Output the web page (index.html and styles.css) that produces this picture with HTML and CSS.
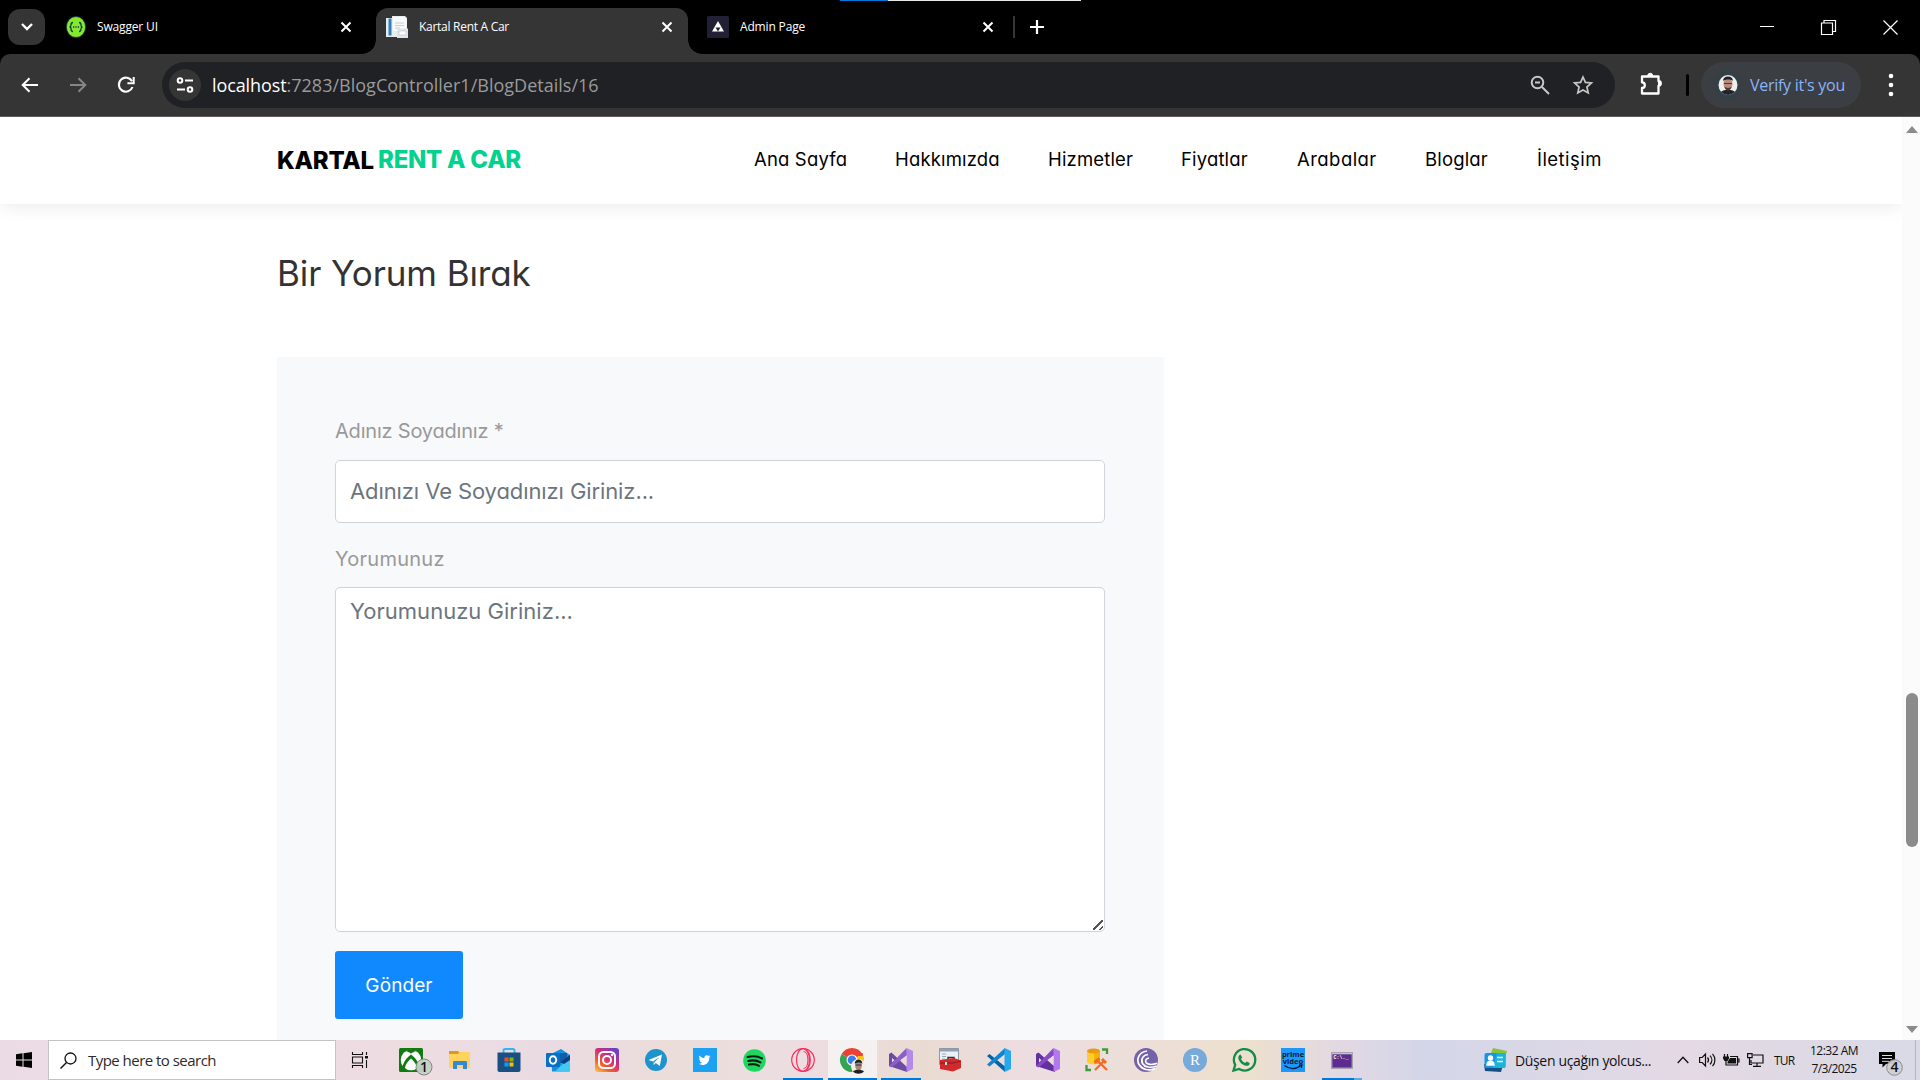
FILE: index.html
```html
<!DOCTYPE html>
<html lang="tr">
<head>
<meta charset="utf-8">
<title>Kartal Rent A Car</title>
<link rel="stylesheet" href="styles.css">
</head>
<body>
<div class="screen">
  <div class="loader"><span class="loader-fill"></span></div>

  <div class="tabstrip">
    <div class="tab-search"><svg width="14" height="10" viewBox="0 0 14 10"><path d="M2 2l5 5 5-5" class="ln w" stroke-width="2.4"/></svg></div>
    <div class="tab tab-first">
      <svg width="20" height="22" viewBox="0 0 20 22"><ellipse cx="10" cy="11" rx="9.6" ry="10.5" fill="#85ea2d" stroke="#173647" stroke-width=".8"/><path d="M7 6.5c-2 0-2 .8-2 2.500s-.3 2-1.500 2c1.200 0 1.500.5 1.500 2s0 2.500 2 2.500M13 6.500c2 0 2 .8 2 2.500s.3 2 1.500 2c-1.200 0-1.500.5-1.500 2s0 2.500-2 2.500" fill="none" stroke="#173647" stroke-width="1.300"/><path d="M7 11h1.300M9.400 11h1.300M11.800 11h1.300" stroke="#173647" stroke-width="1.500"/></svg>
      <span class="tab-title">Swagger UI</span>
      <svg class="tab-close" width="12" height="12" viewBox="0 0 12 12"><path d="M1.500 1.500l9 9M10.500 1.500l-9 9" class="ln w" stroke-width="2"/></svg>
    </div>
    <div class="tab tab-active">
      <svg width="22" height="22" viewBox="0 0 22 22"><path d="M0 2h6V0h13l2 2v19H0z" fill="#e9edf0"/><path d="M2.500 2.500h3v17h-3z" fill="#2f80bd"/><path d="M7 1h11.500l2 2v12H7z" fill="#f7f9fa"/><path d="M9 7h9M9 9.500h9M9 12h5" stroke="#c8ced3"/><path d="M11 12.500h11V22H11z" fill="#dfe5e9"/><path d="M13 15h7v4h-7z" fill="#fafbfc" stroke="#bfc8ce" stroke-width=".6"/></svg>
      <span class="tab-title t-kartal">Kartal Rent A Car</span>
      <svg class="tab-close" width="12" height="12" viewBox="0 0 12 12"><path d="M1.500 1.500l9 9M10.500 1.500l-9 9" class="ln w" stroke-width="2"/></svg>
    </div>
    <div class="tab tab-last">
      <svg width="22" height="22" viewBox="0 0 22 22"><rect width="22" height="22" rx="1.500" fill="#212035"/><path d="M11 5l6 10.500H5z" fill="#fff"/><path d="M8.500 11.500h5L11 15.500z" fill="#212035"/></svg>
      <span class="tab-title">Admin Page</span>
      <svg class="tab-close" width="12" height="12" viewBox="0 0 12 12"><path d="M1.500 1.500l9 9M10.500 1.500l-9 9" class="ln w" stroke-width="2"/></svg>
    </div>
    <span class="tab-sep"></span>
    <svg class="tab-new" width="16" height="16" viewBox="0 0 16 16"><path d="M8 1v14M1 8h14" class="ln w" stroke-width="2.200"/></svg>
    <div class="window-controls">
      <svg width="14" height="14" viewBox="0 0 14 14"><path d="M0 6.500h14" class="ln w"/></svg>
      <svg width="15" height="15" viewBox="0 0 15 15"><path d="M.5 3h11v11.500H.5zM3 3V.5h11.500v11H12" class="ln w" stroke-width="1.200"/></svg>
      <svg width="15" height="15" viewBox="0 0 15 15"><path d="M.5.5l14 14M14.500.5l-14 14" class="ln w" stroke-width="1.200"/></svg>
    </div>
  </div>

  <div class="toolbar-back">
  <div class="toolbar">
    <svg class="nav-back" width="18" height="16" viewBox="0 0 18 16"><path d="M17 8H2M8.500 1.200L1.700 8l6.800 6.800" class="ln w" stroke-width="2"/></svg>
    <svg class="nav-forward" width="18" height="16" viewBox="0 0 18 16"><path d="M1 8h15M9.500 1.200L16.300 8l-6.800 6.800" class="ln" stroke="#868686" stroke-width="2"/></svg>
    <svg class="nav-reload" width="18" height="18" viewBox="0 0 18 18"><path d="M15.500 11A7 7 0 1 1 15 5.200" class="ln w" stroke-width="2.100"/><path d="M16.700 1v6.300h-6.300" class="ln w" stroke-width="2"/></svg>
    <div class="omnibox">
      <span class="site-info"><svg width="18" height="16" viewBox="0 0 18 16"><g class="ln w" stroke-width="2"><circle cx="4" cy="3.500" r="2.300"/><path d="M9 3.500h8M1 12.500h8"/><circle cx="14" cy="12.500" r="2.300"/></g></svg></span>
      <span class="url"><b class="host">localhost</b>:7283/BlogController1/BlogDetails/16</span>
      <svg class="ob-zoom" width="20" height="20" viewBox="0 0 20 20"><g class="ln" stroke="#c7c7c7" stroke-width="2"><circle cx="7.500" cy="7.500" r="5.800"/><path d="M12 12l7 7M5 7.500h5"/></g></svg>
      <svg class="ob-star" width="20" height="20" viewBox="0 0 20 20"><path d="M10 2l2.400 5.400 6 .6-4.500 4 1.300 5.900L10 14.900l-5.200 3 1.300-5.900L1.600 8l6-.6z" class="ln" stroke="#c7c7c7" stroke-width="1.700"/></svg>
    </div>
    <svg class="ext" width="24" height="24" viewBox="0 0 24 24"><path d="M3 3.500h16.500v4.700a2.300 2.300 0 0 1 0 4.600v7.700H3V15a2.800 2.800 0 0 0 0-5.600z" class="ln w" stroke-width="2.300" stroke-linejoin="round"/><path d="M8.700 3a2.500 2.800 0 0 1 5 0zM19.500 8a2.500 2.700 0 0 1 0 5z" fill="#fff" stroke="#fff"/></svg>
    <span class="tool-sep"></span>
    <div class="profile">
      <svg width="26" height="28" viewBox="0 0 26 28"><ellipse cx="13" cy="14" rx="12" ry="13" fill="none" stroke="#24464e" stroke-width="1.800" stroke-dasharray="10 3"/><clipPath id="face"><ellipse cx="13" cy="14" rx="9.500" ry="10"/></clipPath><g clip-path="url(#face)"><path d="M0 0h26v28H0z" fill="#f1eeee"/><ellipse cx="13" cy="13" rx="4.500" ry="6" fill="#b98b7c"/><path d="M8.200 10c-.6-6 10.200-6 9.600 0-1-2-8-2-9.600 0zM4 26c1-7 5-7 9-7s8 0 9 7z" fill="#20242a"/><path d="M9 12.500h8" stroke="#4a3a38"/><path d="M9.500 16c1 4.500 6 4.500 7 0l-3.500 1z" fill="#4b3a38"/></g></svg>
      <span>Verify it's you</span>
    </div>
    <svg class="menu" width="6" height="24" viewBox="0 0 6 24"><g fill="#fff"><circle cx="3" cy="3" r="2.300"/><circle cx="3" cy="12" r="2.300"/><circle cx="3" cy="21" r="2.300"/></g></svg>
  </div>
  </div>

  <div class="viewport">
    <div class="page">
      <header class="site-nav">
        <div class="logo"><span class="logo-dark">KARTAL</span><span class="logo-green">RENT A CAR</span></div>
        <nav class="links"><a>Ana Sayfa</a><a>Hakkımızda</a><a>Hizmetler</a><a>Fiyatlar</a><a class="wide">Arabalar</a><a>Bloglar</a><a class="wide">İletişim</a></nav>
      </header>
      <main class="content">
        <h3 class="heading">Bir Yorum Bırak</h3>
        <form class="comment-form">
          <label class="label">Adınız Soyadınız *</label>
          <input class="field" type="text" placeholder="Adınızı Ve Soyadınızı Giriniz...">
          <label class="label label-second">Yorumunuz</label>
          <textarea class="field area" placeholder="Yorumunuzu Giriniz..."></textarea>
          <button class="send" type="button">Gönder</button>
        </form>
      </main>
    </div>
    <div class="scrollbar">
      <svg width="12" height="7" viewBox="0 0 12 7"><path d="M6 0l6 7H0z" fill="#8b8b8b"/></svg>
      <span class="thumb"></span>
      <svg width="12" height="7" viewBox="0 0 12 7"><path d="M6 7l6-7H0z" fill="#8b8b8b"/></svg>
    </div>
  </div>

  <div class="taskbar">
    <div class="start"><svg width="16" height="16" viewBox="0 0 16 16"><path d="M0 2.300L6.500 1.300v6.200H0zM7.500 1.200L16 0v7.500H7.500zM0 8.500h6.500v6.200L0 13.700zM7.500 8.500H16V16l-8.500-1.200z"/></svg></div>
    <div class="search"><svg width="17" height="17" viewBox="0 0 17 17"><circle cx="10.500" cy="6.500" r="5.500" class="ln" stroke="#111" stroke-width="1.300"/><path d="M6.500 10.500l-6 6" stroke="#111" stroke-width="1.400"/></svg><span>Type here to search</span></div>
    <div class="taskview"><svg width="16" height="16" viewBox="0 0 16 16"><path d="M.5 0v2.500h10V0M.5 16v-2.500h10V16M.5 5h10v6H.5zM14.500 0v3M14.500 8v8" class="ln" stroke="#111" stroke-width="1.100"/><path d="M13 4h3v2.500h-3z" fill="#111"/></svg></div>
    <div class="apps">
      <div class="app"><svg width="32" height="28" viewBox="0 0 32 28"><rect x="0" y="0" width="24" height="24" rx="1.500" fill="#107c10"/><circle cx="12" cy="12" r="10.300" fill="#fff"/><path d="M6 3.300c3 0 6 2.300 6 2.300s3-2.300 6-2.300C14 .8 10 .8 6 3.300z" fill="#107c10"/><path d="M3 21C4 14 8 9.500 12 6.500c4 3 8 7.500 9 14.500l-2.500 1C18 17 15 13 12 10.500 9 13 6 17 5.500 22z" fill="#107c10"/></svg><svg class="count" width="18" height="18" viewBox="0 0 18 18"><circle cx="9" cy="9" r="8" fill="#c4d0c5" fill-opacity=".95" stroke="#858585"/><text x="9" y="13.500" class="badge-text">1</text></svg></div>
      <div class="app"><svg width="22" height="18" viewBox="0 0 22 18"><path d="M0 0h9l2 2v3H0z" fill="#d99c16"/><path d="M0 3h9l2-2h10v16H0z" fill="#ffd35c"/><path d="M4 18v-6.500c0-1 .5-1.500 1.500-1.500h11c1 0 1.500.5 1.500 1.500V18h-4v-4H8v4z" fill="#3488d8"/></svg></div>
      <div class="app"><svg width="24" height="24" viewBox="0 0 24 24"><path d="M6.500 6V2.500c0-1 .5-1.500 1.500-1.500h8c1 0 1.500.5 1.500 1.500V6" fill="none" stroke="#30b7f2" stroke-width="2"/><path d="M.5 4.500h23V22c0 1.200-.8 2-2 2h-19c-1.200 0-2-.8-2-2z" fill="#194f83"/><path d="M7.500 9.500h4v4h-4z" fill="#f25022"/><path d="M12.500 9.500h4v4h-4z" fill="#7fba00"/><path d="M7.500 14.500h4v4h-4z" fill="#00a4ef"/><path d="M12.500 14.500h4v4h-4z" fill="#ffb900"/></svg></div>
      <div class="app"><svg width="24" height="24" viewBox="0 0 24 24"><path d="M5 6l10-5 9 6v15c0 1-.5 1.500-1.500 1.500H6z" fill="#1490df"/><path d="M11 5h10v10H11z" fill="#0f5fa8"/><path d="M9 23.500L24 9v13c0 1-.5 1.500-1.500 1.500z" fill="#42c8f3"/><path d="M24 7L15 14l3 2 6-4z" fill="#0b3f7d"/><rect y="5" width="14" height="14" rx="1" fill="#0871c7"/><ellipse cx="7" cy="12" rx="3.200" ry="3.700" fill="none" stroke="#fff" stroke-width="2"/></svg></div>
      <div class="app"><svg width="24" height="24" viewBox="0 0 24 24"><defs><linearGradient id="ig" x1="0" y1="1" x2=".8" y2="0"><stop offset="0" stop-color="#ffc94a"/><stop offset=".35" stop-color="#f2592e"/><stop offset=".65" stop-color="#d02a83"/><stop offset="1" stop-color="#6a42c4"/></linearGradient></defs><rect width="24" height="24" rx="3" fill="url(#ig)"/><rect x="4" y="4" width="16" height="16" rx="4.500" class="ln w" stroke-width="2"/><circle cx="12" cy="12" r="4" class="ln w" stroke-width="2"/><circle cx="17" cy="7" r="1.200" fill="#fff"/></svg></div>
      <div class="app"><svg width="22" height="22" viewBox="0 0 22 22"><circle cx="11" cy="11" r="11" fill="#1f93ce"/><path d="M3.500 11L17 5.500 14.800 17l-4-3-2 2-.8-3.500z" fill="#fff"/><path d="M8 12.500l6.500-4.500-5 5.200-.7 2.300z" fill="#1f93ce"/></svg></div>
      <div class="app"><svg width="24" height="24" viewBox="0 0 24 24"><path d="M0 0h24v24H0z" fill="#1da1f2"/><path d="M17.500 8.200c-.5.300-1 .4-1.400.4.500-.3.900-.8 1-1.300-.5.300-1 .5-1.500.6a2.500 2.500 0 0 0-4.200 2.200c-2-.1-3.800-1-5-2.600-.7 1.200-.3 2.500.7 3.300-.4 0-.8-.1-1.100-.3 0 1.200.8 2.200 2 2.500-.4.100-.7.100-1.100 0 .3 1 1.200 1.700 2.300 1.700-1 .8-2.200 1.200-3.600 1.100 4.800 3 11-.1 10.700-6.400.5-.3.900-.8 1.200-1.200z" fill="#fff"/></svg></div>
      <div class="app"><svg width="23" height="23" viewBox="0 0 23 23"><circle cx="11.500" cy="11.500" r="11.300" fill="#1ed760"/><path d="M4.500 8c5-1.300 10.500-.8 14.500 1.400M5.200 12c4.500-1.200 8.800-.6 12.300 1.300M6 15.600c3.600-.8 7-.5 10 1.200" class="ln" stroke="#0b1a10" stroke-width="2.100" stroke-linecap="round"/></svg></div>
      <div class="app running"><svg width="24" height="24" viewBox="0 0 24 24"><g class="ln" stroke="#fa2e5b" stroke-width="1.200"><circle cx="12" cy="12" r="11.300"/><ellipse cx="12" cy="12" rx="6.500" ry="11.300"/><path d="M12.500 3.500c6 0 6 17 0 17M14 1c7 4 7 18 0 22"/></g></svg></div>
      <div class="app running focused"><svg width="28" height="27" viewBox="0 0 28 27"><path d="M12 12L1.600 6A12 12 0 0 1 22.400 6z" fill="#ea4335"/><path d="M12 12L22.400 6A12 12 0 0 1 12 24z" fill="#fbc116"/><path d="M12 12v12A12 12 0 0 1 1.600 6z" fill="#34a353"/><path d="M12 6.500h10.700" stroke="#ea4335" stroke-width="3"/><circle cx="12" cy="12" r="5.500" fill="#fff"/><circle cx="12" cy="12" r="4.400" fill="#3b7ded"/><circle cx="18.500" cy="18.500" r="7.500" fill="#f0eeee"/><ellipse cx="18.500" cy="17.500" rx="3.300" ry="4.500" fill="#a98576"/><path d="M14.800 16c-.5-6 8-6 7.500 0-1-2-6-2-7.500 0zM13 23.500c1.500-2.500 9.500-2.500 11 0-3 3-8 3-11 0z" fill="#1f2125"/><path d="M15.500 17h6" stroke="#333"/></svg></div>
      <div class="app running"><svg width="24" height="24" viewBox="0 0 24 24"><path d="M0 6l2.500-1.500L20 21l-2 3L0 18zm3 4v4.500l2.500-2.300z" fill="#6d4aa3" fill-rule="evenodd"/><path d="M2.500 19.500L0 18 17.500 0l1 7z" fill="#8b5fc7"/><path d="M17.500 0L24 3v18l-6.500 3z" fill="#b48ae8"/><path d="M17.500 7.500v9L11.500 12z" fill="#eadcd4"/></svg></div>
      <div class="app"><svg width="23" height="24" viewBox="0 0 23 24"><path d="M.5.500h19v16H.5z" fill="#edf1f6" stroke="#8f98a5"/><path d="M1 1h18v2.500H1z" fill="#8fa0b7"/><path d="M3 6h4M3 8.500h4M3 11h3" stroke="#9aa5b5"/><path d="M9 12V9.500h6V12" fill="none" stroke="#30333a" stroke-width="1.500"/><path d="M1 12l14-2 7 2.500V20l-8 3.500L1 21z" fill="#cf2b2d"/><path d="M1 15h13l8-2" stroke="#8d171b" fill="none"/><path d="M6 14h2v3H6z" fill="#ddd"/></svg></div>
      <div class="app"><svg width="24" height="24" viewBox="0 0 24 24"><path d="M0 8l2.500-2L18 18.500V24z" fill="#0065a9"/><path d="M0 16.500l2.500 2L18 6V0z" fill="#1084cc"/><path d="M17.500 0L24 3v18l-6.500 3z" fill="#25a8ee"/></svg></div>
      <div class="app"><svg width="24" height="24" viewBox="0 0 24 24"><path d="M0 6l2.500-1.500L19 19v5L0 18zm3 4v4.500l2.500-2.300z" fill="#63309f" fill-rule="evenodd"/><path d="M2.500 19.500L0 18 17.500 0l1 7z" fill="#8849c9"/><path d="M17.500 0L24 3v18l-6.500 3z" fill="#b179ed"/><path d="M17.500 7.500v9L11.500 12z" fill="#ebddde"/></svg></div>
      <div class="app"><svg width="24" height="24" viewBox="0 0 24 24"><path d="M2 3v11c0 3 13 3 13 0V3z" fill="#ffce2e"/><path d="M9 4h6v10c0 1.500-3 2.200-6 2.200z" fill="#f4b400"/><ellipse cx="8.500" cy="3" rx="6.500" ry="2.500" fill="#e99a10"/><path d="M17 1.500h5V6M1.500 17v5H6" fill="none" stroke="#3d9a3f" stroke-width="2.300"/><path d="M10 22l9-9M12 12l10 10" stroke="#f36b21" stroke-width="2.200"/><path d="M9.500 14.500l5-4M17 11l4 4" stroke="#f36b21" stroke-width="3"/></svg></div>
      <div class="app"><svg width="24" height="24" viewBox="0 0 24 24"><circle cx="12" cy="12" r="12" fill="#7563aa"/><path d="M13 3C5 4 2 11 5 16.500c3 5 10 7 16 4M14 6.500c-5 .5-7.500 5-5.500 9 2 3.500 8 5 14 2.500M15 10c-3 .3-4 2.700-3 4.500 1.300 2.200 6 2.700 11 .8" class="ln w" stroke-width="1.700"/></svg></div>
      <div class="app"><svg width="24" height="24" viewBox="0 0 24 24"><circle cx="12" cy="12" r="12" fill="#75aadb"/><text x="12" y="17" class="r-letter">R</text></svg></div>
      <div class="app"><svg width="24" height="24" viewBox="0 0 24 24"><path d="M1.500 22.500l1.700-5.600A10.700 10.700 0 1 1 7 20.900z" class="ln" stroke="#128c4a" stroke-width="2.300"/><path d="M8.500 6.500l1.700 3-1.200 1.500c1 2 2.300 3.200 4.200 4l1.400-1.500 3 1.500c.2 2.200-1.600 3-3.300 2.800C10 17.300 6.700 13.500 6.300 10c0-1.700.8-3.200 2.200-3.500z" fill="#128c4a"/></svg></div>
      <div class="app"><svg width="24" height="24" viewBox="0 0 24 24"><path d="M0 0h24v24H0z" fill="#1a98ff"/><text x="12" y="8.500" class="prime">prime</text><text x="12" y="15.500" class="prime">video</text><path d="M3.500 17.500c5 3.800 11 3.800 16 .5M18 17h3l-.8 2.800" class="ln" stroke="#0a1c30" stroke-width="1.300"/></svg></div>
      <div class="app running grouped"><svg width="22" height="17" viewBox="0 0 22 17"><path d="M.7.700h20.600v15.600H.7z" fill="#5c2d91" stroke="#a7a3ab" stroke-width="1.400"/><path d="M1 1h20v1.300H1z" fill="#c7c3cb"/><text x="2.500" y="7" class="cmd">C:\._</text></svg></div>
    </div>
    <div class="tray">
      <svg class="news-icon" width="24" height="24" viewBox="0 0 24 24"><path d="M8 5l2-5 14 3-3 12z" fill="#86c440"/><path d="M1 16l1 7 16 1 2-7z" fill="#154f86"/><rect x="1.500" y="5" width="21" height="15" rx="2" fill="#1596e0"/><path d="M14 5h6.500c1.300 0 2 .7 2 2v11c0 1.300-.7 2-2 2H10z" fill="#19b5d8"/><circle cx="7.500" cy="10" r="2.700" fill="#fff"/><path d="M4 17c0-5 7-5 7 0zM14 9.500h6M14 13.500h6" fill="#fff" stroke="#fff" stroke-width="1.500"/></svg>
      <span class="news">Düşen uçağın yolcus...</span>
      <svg class="chev" width="12" height="8" viewBox="0 0 12 8"><path d="M.7 7L6 1.300 11.300 7" class="ln" stroke="#111" stroke-width="1.300"/></svg>
      <svg class="sound" width="17" height="14" viewBox="0 0 17 14"><path d="M.6 4.500h2.600L6.500 1v12L3.200 9.500H.6zM8.500 4.500c1.300 1.500 1.300 3.500 0 5M11 2.700c2.500 2.500 2.500 6 0 8.600M13.500.8c3.200 3.500 3.200 9 0 12.400" class="ln" stroke="#111" stroke-width="1.200"/></svg>
      <svg class="battery" width="16" height="12" viewBox="0 0 16 12"><path d="M1.500 0v3M4.500 0v3M3 6v5h11.500V2.500H7M14.500 5H16v3h-1.500" class="ln" stroke="#111" stroke-width="1.200"/><path d="M0 2.500h6v2L4.500 7h-3L0 4.500zM7 4h6v5.500H4.500V8z" fill="#111"/></svg>
      <svg class="net" width="17" height="14" viewBox="0 0 17 14"><path d="M6 2h10v8H4V7M6 13.400h8M10 10v3M.6.600h4.500v4H.6zM2.500 5v6.500H5" class="ln" stroke="#111" stroke-width="1.200"/></svg>
      <span class="lang">TUR</span>
      <div class="clock"><span class="time">12:32 AM</span><span class="date">7/3/2025</span></div>
      <svg class="notif" width="26" height="26" viewBox="0 0 26 26"><path d="M0 1h16v12H7l-3.500 3.500V13H0z" fill="#000"/><path d="M3 4.500h10M3 7.500h10M3 10.300h7" stroke="#dcdbe6"/><circle cx="15.500" cy="16.500" r="7.800" fill="#cfcfd4" fill-opacity=".95" stroke="#8b8b8b"/><text x="15.500" y="21" class="badge-text">4</text></svg>
    </div>
  </div>
</div>
</body>
</html>
```
FILE: styles.css
```css
* { box-sizing: border-box; }
body { margin: 0; background: #fff; font-family: "Open Sans", "Noto Sans", sans-serif; }
svg { display: block; flex: none; overflow: visible; }
.ln { fill: none; }
.w { stroke: #fff; }

.screen { position: relative; display: flex; flex-direction: column; width: 1920px; height: 1080px; overflow: hidden; }
.loader { position: absolute; top: 0; left: 840px; z-index: 2; width: 241px; height: 1px; background: #e8e8e8; }
.loader-fill { display: block; width: 48px; height: 1px; background: #0078d7; }

/* Tab strip */
.tabstrip { display: flex; align-items: center; height: 54px; background: #000; color: #fff; }
.tab-search { display: flex; align-items: center; justify-content: center; width: 37px; height: 36px; margin-left: 8px; border-radius: 12px; background: #353535; }
.tab { display: flex; align-items: center; height: 38px; gap: 11px; padding: 0 16px 0 10px; }
.tab-title { flex: 1; padding-bottom: 1px; font-size: 12px; letter-spacing: -.16px; white-space: nowrap; }
.t-kartal { letter-spacing: -.28px; }
.tab-first { width: 301px; margin-left: 11px; padding-right: 5px; }
.tab-active { position: relative; width: 312px; height: 46px; margin: 8px 0 0 19px; padding-bottom: 8px; padding-right: 15px; border-radius: 12px 12px 0 0; background: #353535; }
.tab-active::before, .tab-active::after { content: ""; position: absolute; bottom: 0; width: 14px; height: 14px; }
.tab-active::before { right: 100%; background: radial-gradient(circle at 0 0, transparent 13.5px, #353535 14px); }
.tab-active::after { left: 100%; background: radial-gradient(circle at 100% 0, transparent 13.5px, #353535 14px); }
.tab-last { width: 307px; margin-left: 9px; padding-right: 10px; }
.tab-sep { width: 2px; height: 22px; margin-left: 9px; background: #353535; }
.tab-new { margin-left: 14px; }
.window-controls { display: flex; align-items: center; gap: 47px; margin: 0 22px 0 auto; }

/* Toolbar */
.toolbar-back { height: 63px; background: #000; }
.toolbar { display: flex; align-items: center; height: 63px; padding-left: 21px; border-bottom: 1px solid #5c5c5c; border-radius: 10px 10px 0 0; background: #353535; }
.nav-forward { margin-left: 30px; }
.nav-reload { margin-left: 30px; }
.omnibox { display: flex; align-items: center; width: 1453px; height: 46px; margin-left: 27px; padding: 0 22px 0 7px; border-radius: 23px; background: #202124; }
.site-info { display: flex; align-items: center; justify-content: center; width: 32px; height: 32px; border-radius: 50%; background: #353535; }
.url { flex: 1; margin-left: 11px; color: #9a9a9a; font-size: 18px; letter-spacing: .01px; }
.host { color: #fff; font-weight: 400; letter-spacing: -.1px; }
.ob-star { margin-left: 23px; }
.ext { margin-left: 24px; }
.tool-sep { width: 3px; height: 22px; margin-left: 23px; border-radius: 2px; background: #000; }
.profile { display: flex; align-items: center; gap: 9px; width: 160px; height: 46px; margin-left: 12px; padding: 0 0 1px 14px; border-radius: 23px; background: #3b3e43; color: #8ab4f8; font-size: 16px; letter-spacing: -.28px; white-space: nowrap; }
.menu { margin-left: 27px; }

/* Page */
.viewport { display: flex; height: 923px; }
.page { flex: 1; overflow: hidden; font-family: Inter, sans-serif; font-feature-settings: "cv11"; }
.site-nav { position: relative; display: flex; justify-content: space-between; align-items: center; height: 87px; padding: 0 301px 2px 277px; background: #fff; box-shadow: 0 0 20px rgba(0, 0, 0, .1); }
.logo { display: flex; gap: 4px; font-size: 24px; font-weight: 800; }
.logo-dark { color: #000; letter-spacing: -.2px; padding-top: 1px; }
.logo-green { color: #01d28e; letter-spacing: -.26px; }
.links { display: grid; grid-template-columns: 93px 105px 85px 68px 80px 64px 64px; gap: 48px; padding-bottom: 2px; color: #000; font-size: 18.5px; letter-spacing: .16px; white-space: nowrap; }
.wide { letter-spacing: .45px; }
.content { padding: 47px 0 0 277px; }
.heading { margin: 0 0 62px; color: #333; font-size: 35px; font-weight: 400; line-height: 44px; letter-spacing: -.12px; }
.comment-form { display: flex; flex-direction: column; align-items: flex-start; width: 887px; height: 683px; padding: 59px 59px 0 58px; background: #f8f9fb; }
.label { margin-bottom: 14px; color: #999; font-size: 20px; line-height: 30px; letter-spacing: -.2px; }
.label-second { margin: 21px 0 13px; letter-spacing: .25px; }
.field { width: 770px; height: 63px; margin: 0; padding: 0 15px 2px 14px; border: 1px solid #ced4da; border-radius: 5px; background: #fff; font: inherit; font-feature-settings: inherit; font-size: 22px; letter-spacing: -.1px; }
.field::placeholder { color: #6c757d; opacity: 1; }
.area { height: 345px; padding-top: 7px; line-height: 32px; letter-spacing: .02px; resize: both; }
.area::-webkit-resizer { background: linear-gradient(135deg, transparent 43%, #555 45%, #555 55%, transparent 57%, transparent 75%, #555 77%, #555 87%, transparent 89%) 4px 4px / 10px 10px no-repeat; }
.send { width: 128px; height: 68px; margin-top: 19px; padding: 0; border: 0; border-radius: 3px; background: #1089ff; color: #fff; font: 400 19px Inter, sans-serif; letter-spacing: .1px; }
.scrollbar { display: flex; flex-direction: column; align-items: center; width: 18px; padding: 9px 0 7px 2px; background: #fbfbfb; }
.thumb { width: 12px; height: 154px; margin: 560px 0 auto; border-radius: 6px; background: #8b8b8b; }

/* Taskbar */
.taskbar { display: flex; height: 40px; background: linear-gradient(90deg, #ebdbe5 0, #eddde1 22%, #eadbe3 28%, #ebddd9 35%, #eddde3 42%, #e9dbd1 48%, #eddde1 54%, #ece0cd 65%, #e2d8e4 70%, #d3d6e8 74%, #dcd8e6 82%, #e4d9e4 88%, #d8dae6 100%); }
.start, .taskview { display: flex; align-items: center; justify-content: center; width: 48px; }
.search { display: flex; align-items: center; gap: 11px; width: 288px; padding-left: 11px; border: 1px solid #c4c4c6; background: #fff; color: #2b2b2b; font-size: 15px; letter-spacing: -.53px; }
.taskview { margin-right: 3px; }
.apps { display: flex; }
.app { position: relative; display: flex; align-items: center; justify-content: center; width: 49px; padding-right: 1px; background-repeat: no-repeat; }
.app:first-child { padding: 4px 0 0 7px; }
.count { position: absolute; left: 28px; top: 18px; }
.running { background-image: linear-gradient(#0078d7, #0078d7); background-size: 40px 2px; background-position: 4px 100%; }
.focused { padding: 3px 0 0 3px; background-color: #f6f1f1; background-size: 100% 2px; background-position: 0 100%; }
.grouped { background-image: linear-gradient(90deg, #0078d7 80%, #5fa8e2 80%); }
.badge-text { font: 600 14px "Open Sans", sans-serif; text-anchor: middle; fill: #111; }
.r-letter { font: 15px "Liberation Serif", serif; text-anchor: middle; fill: #fff; }
.prime { font: 700 7.500px "Open Sans", sans-serif; text-anchor: middle; fill: #0a1c30; }
.cmd { font: 700 5px "Liberation Mono", monospace; fill: #fff; }
.tray { display: flex; align-items: center; width: 433px; margin-left: auto; border-right: 1px solid #b5b5bf; margin-right: 4px; color: #111; white-space: nowrap; }
.news { width: 137px; margin-left: 8px; font-size: 14px; letter-spacing: -.35px; }
.chev { margin-left: 25px; }
.sound { margin-left: 10px; }
.battery { margin-left: 7px; }
.net { margin-left: 8px; }
.lang { width: 22px; margin-left: 10px; font-size: 12px; letter-spacing: -.85px; }
.clock { display: flex; flex-direction: column; align-items: center; width: 52px; margin-left: 12px; font-size: 12px; line-height: 18px; letter-spacing: -.5px; }
.date { letter-spacing: -.6px; }
.notif { margin: 7px 0 0 19px; }
```
